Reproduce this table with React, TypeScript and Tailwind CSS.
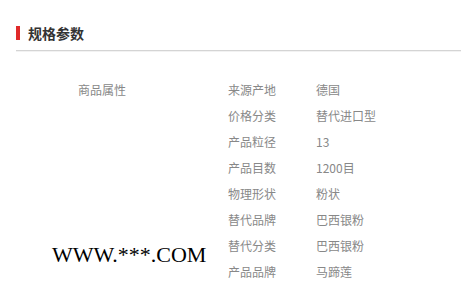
const rows: [string, string][] = [
  ['来源产地', '德国'],
  ['价格分类', '替代进口型'],
  ['产品粒径', '13'],
  ['产品目数', '1200目'],
  ['物理形状', '粉状'],
  ['替代品牌', '巴西银粉'],
  ['替代分类', '巴西银粉'],
  ['产品品牌', '马蹄莲'],
];

export default function App() {
  return (
    <div
      className="relative w-[461px] h-[294px] overflow-hidden bg-white"
      style={{ fontFamily: '"Microsoft YaHei", "Noto Sans CJK SC", sans-serif' }}
    >
      {/* Header */}
      <div className="pl-4 pt-[26px]">
        <div className="flex items-center h-[14px]">
          <div className="w-1 h-[14px] bg-[#e02a2a]" />
          <h2 className="ml-2 text-[14px] leading-[14px] font-bold text-[#333]">规格参数</h2>
        </div>
        <div className="mt-[10px] h-px bg-[#d4d4d4]" />
        <div className="h-px bg-[#f2f2f2]" />
      </div>

      {/* Specs */}
      <div className="flex pt-[25px] text-[12px] text-[#888]">
        <div className="w-[228px] pl-[78px] leading-[26px]">商品属性</div>
        <div className="flex flex-col">
          {rows.map(([k, v]) => (
            <div key={k} className="flex h-[26px] items-center">
              <span className="w-[88px]">{k}</span>
              <span>{v}</span>
            </div>
          ))}
        </div>
      </div>

      {/* watermark */}
      <div
        className="absolute left-[52px] top-[242px] text-[22px] leading-[26px] text-black"
        style={{ fontFamily: '"Liberation Serif", serif' }}
      >
        WWW.***.COM
      </div>
    </div>
  );
}
